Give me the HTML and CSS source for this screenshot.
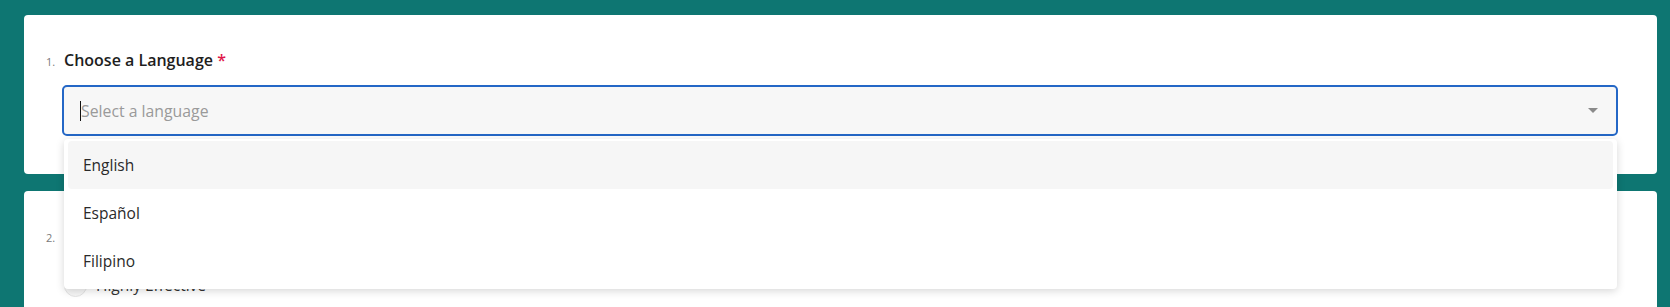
FILE: index.html
```html
<!DOCTYPE html>
<html lang="en">
<head>
<meta charset="utf-8">
<title>Form</title>
<link rel="stylesheet" href="styles.css">
</head>
<body>
<div class="page">
  <section class="card">
    <div class="question">
      <span class="qnum">1.</span>
      <span class="qlabel">Choose a Language <span class="req">*</span></span>
    </div>
    <div class="answer">
      <div class="select">
        <span class="caret"></span><span class="placeholder">Select a language</span>
        <svg class="arrow" width="10" height="5" viewBox="0 0 10 5"><path d="M0 0H10L5 5Z" fill="#8a8a8a"/></svg>
      </div>
      <ul class="menu">
        <li class="opt active">English</li>
        <li class="opt">Español</li>
        <li class="opt">Filipino</li>
      </ul>
    </div>
  </section>
  <section class="card">
    <div class="question">
      <span class="qnum">2.</span>
      <span class="qlabel">How effective was the session?</span>
    </div>
    <div class="answer">
      <label class="radio"><span class="circle"></span><span class="rtext">Highly Effective</span></label>
    </div>
  </section>
</div>
</body>
</html>
```
FILE: styles.css
```css
html, body {
  margin: 0;
  padding: 0;
  height: 100%;
  overflow: hidden;
}
body {
  background: #0e7672;
  font-family: "Open Sans", "Noto Sans", sans-serif;
  color: #222;
}
.page {
  padding: 15px 13px 0 24px;
  display: flex;
  flex-direction: column;
  gap: 17px;
}
.card {
  background: #fff;
  border-radius: 4px;
  padding: 34px 39px 38px 22px;
}
.question {
  display: flex;
  align-items: baseline;
  height: 22px;
  line-height: 22px;
}
.qnum {
  width: 18px;
  font-size: 11px;
  color: #7a7a7a;
}
.qlabel {
  font-size: 16px;
  font-weight: 600;
  color: #1e1e1e;
}
.req {
  color: #e0174a;
}
.answer {
  position: relative;
  margin: 14px 0 0 16px;
}
.select {
  height: 47px;
  border: 2px solid #2467c6;
  border-radius: 5px;
  background: #f7f7f7;
  display: flex;
  align-items: center;
  padding: 0 18px 0 16px;
}
.caret {
  width: 1px;
  height: 20px;
  background: #111;
  margin-top: 1px;
}
.placeholder {
  flex: 1;
  font-size: 15.8px;
  color: #9a9a9a;
}
.arrow {
  display: block;
  margin-left: auto;
}
.menu {
  position: absolute;
  left: 2px;
  right: 1px;
  top: calc(100% + 3px);
  margin: 0;
  padding: 2px 4px 4px;
  list-style: none;
  background: #fff;
  border-radius: 4px;
  box-shadow: 0 2px 8px rgba(0, 0, 0, 0.16);
  z-index: 5;
}
.opt {
  height: 48px;
  line-height: 48px;
  padding-left: 15px;
  font-size: 15.5px;
  color: #2a2a2a;
  border-radius: 4px;
}
.opt.active {
  background: #f6f6f6;
}
.radio {
  display: flex;
  align-items: center;
  gap: 9px;
  height: 48px;
  margin-left: 2px;
}
.circle {
  width: 21px;
  height: 21px;
  border-radius: 50%;
  border: 1px solid #e4e4e4;
  background: #f6f6f6;
}
.rtext {
  font-size: 15.5px;
  color: #333;
}
```
